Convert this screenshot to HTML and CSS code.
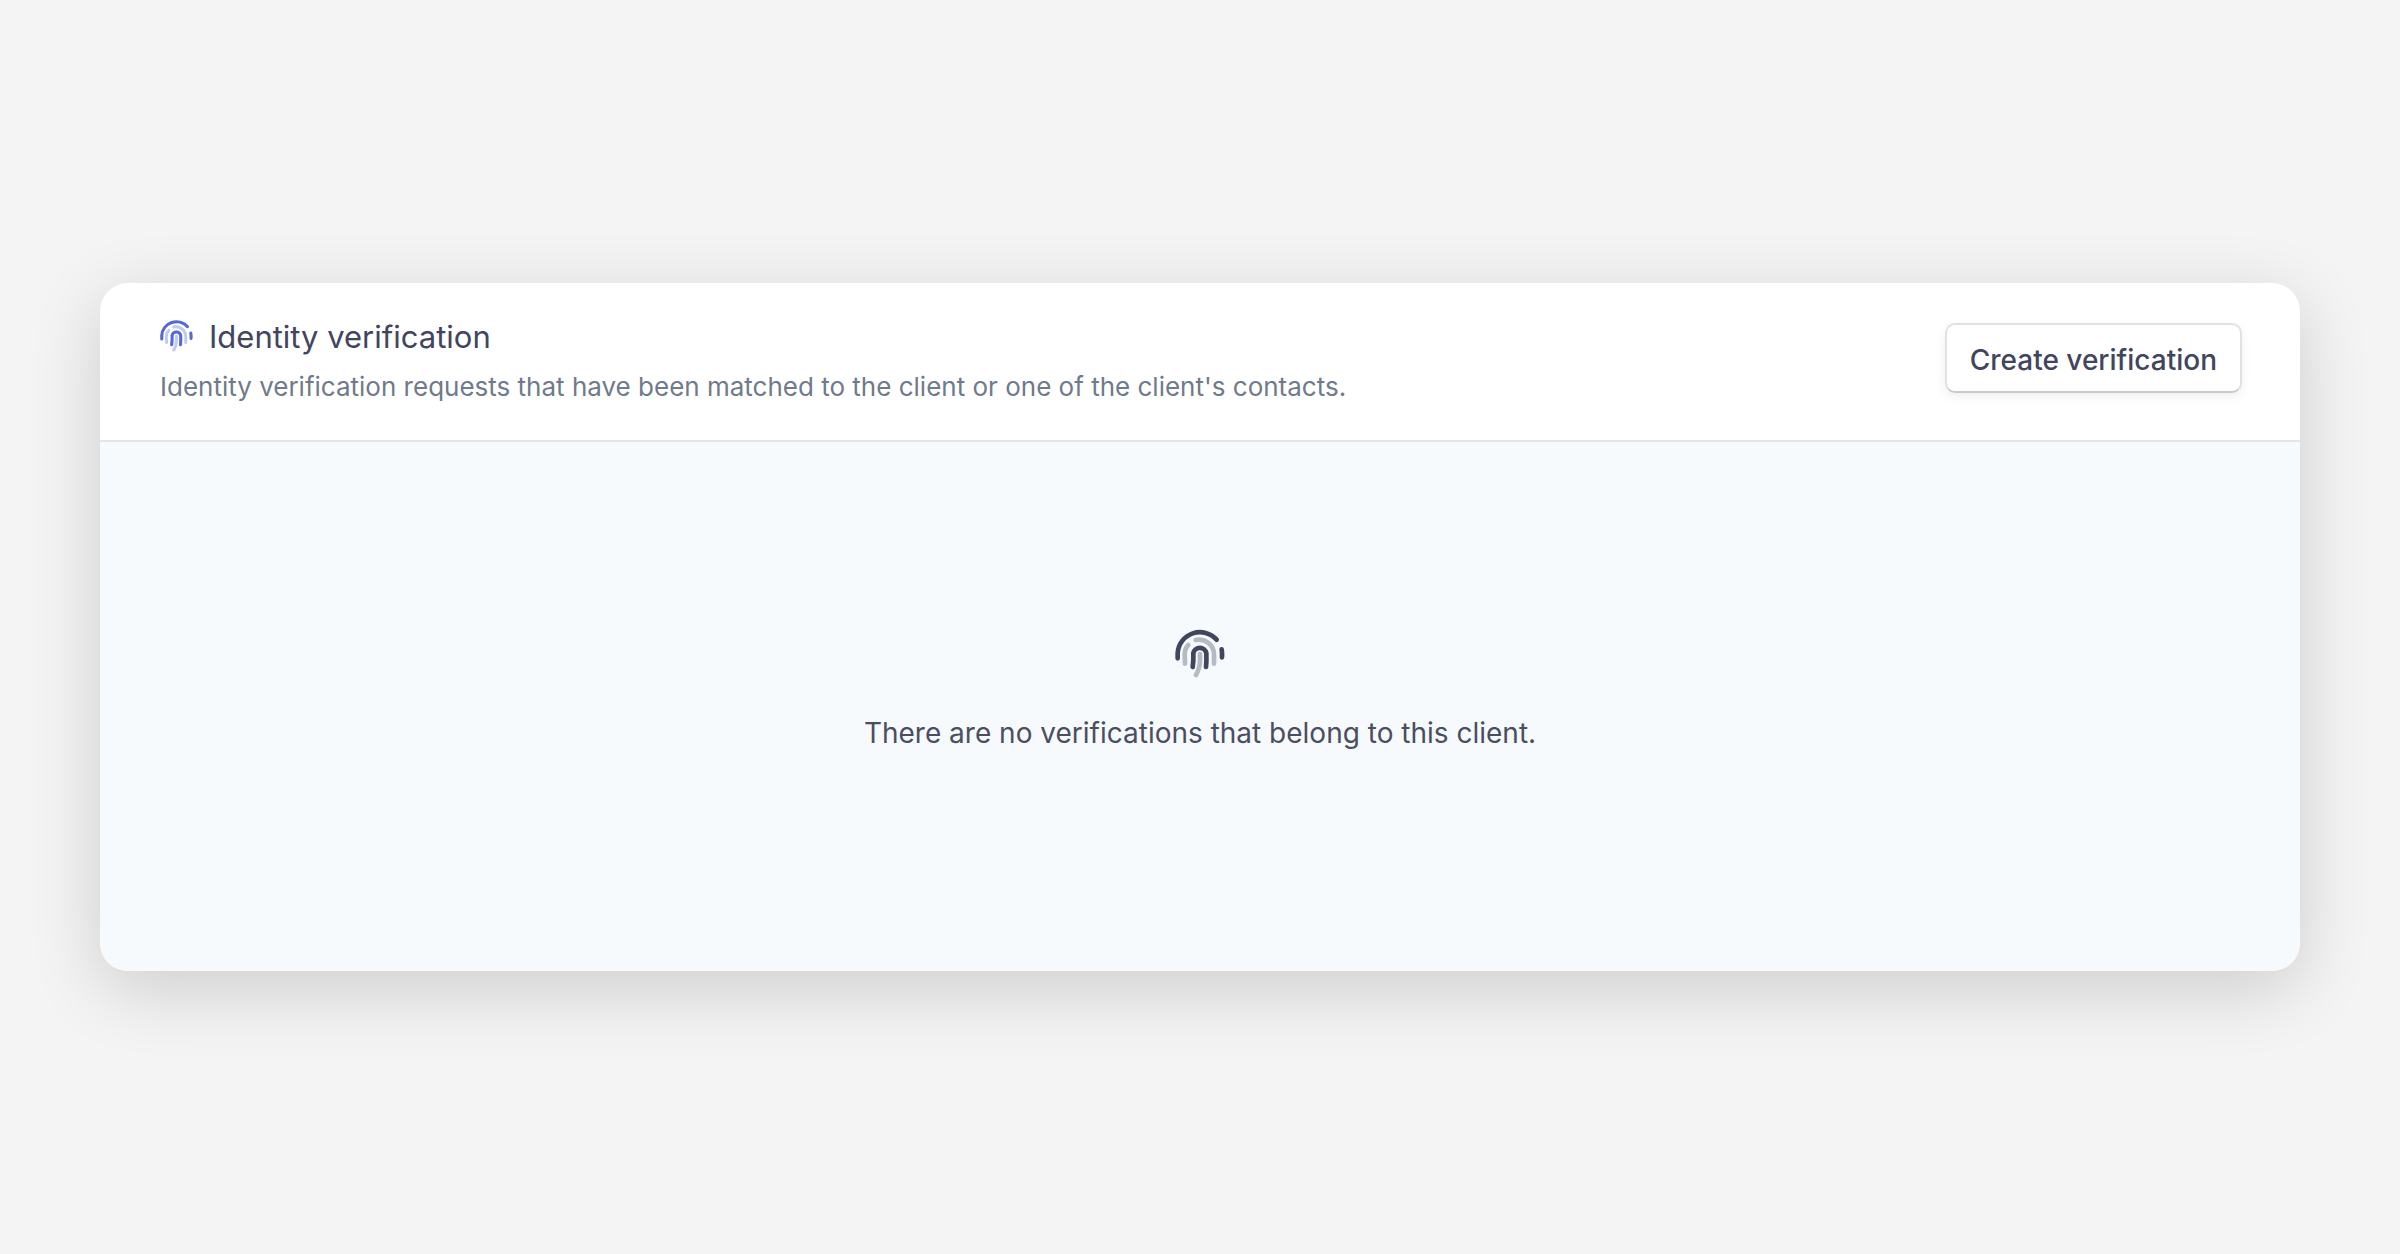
FILE: index.html
```html
<!DOCTYPE html>
<html lang="en">
<head>
  <meta charset="UTF-8" />
  <meta name="viewport" content="width=device-width, initial-scale=1" />
  <title>Identity verification</title>
  <link rel="stylesheet" href="styles.css">
</head>
<body>

<svg class="sprite" width="0" height="0" aria-hidden="true">
  <symbol id="fingerprint" viewBox="0 0 150 150">
    <g fill="none" stroke="currentColor" stroke-width="14" stroke-linecap="round">
      <g opacity="0.35">
        <path d="M40 51 Q29 62 29 80 L30 107" />
        <path d="M62 36 A45 45 0 0 1 117 80 V107" />
        <path d="M75 78 V95 Q75 120 63 141" />
      </g>
      <path d="M8 91 V75 A67 67 0 0 1 125 35" />
      <path d="M140 64 Q142 76 141 88" />
      <path d="M53 117 Q56 100 55 75 A20 20 0 0 1 94 75 Q95 100 93 117" />
    </g>
  </symbol>
</svg>

<main class="card">
  <header class="card-header">
    <div class="heading">
      <h1><svg class="icon"><use href="#fingerprint" /></svg>Identity verification</h1>
      <p>Identity verification requests that have been matched to the client or one of the client's contacts.</p>
    </div>
    <button type="button">Create verification</button>
  </header>

  <section class="empty">
    <svg class="empty-icon"><use href="#fingerprint" /></svg>
    <p>There are no verifications that belong to this client.</p>
  </section>
</main>

</body>
</html>
```
FILE: styles.css
```css
* {
  box-sizing: border-box;
}
body {
  font-family: Inter, sans-serif;
  background-color: #f4f4f4;
  color: #414560;
  margin: 0;
  padding: 40px 100px;
  min-height: 100vh;
  display: flex;
  align-items: center;
}
h1, p {
  margin: 0;
  font-weight: 400;
}
.sprite {
  position: absolute;
}
.card {
  flex: 1;
  background-color: #fff;
  border-radius: 28px;
  overflow: hidden;
  box-shadow: 0 18px 70px rgba(0, 0, 0, 0.16);
}
.card-header {
  display: flex;
  justify-content: space-between;
  align-items: flex-start;
  padding: 32px 58px 33px 60px;
  border-bottom: 2px solid #e3e6e9;
}
h1 {
  display: flex;
  align-items: center;
  gap: 16px;
  font-size: 31px;
  line-height: 44px;
}
.heading p {
  margin-top: 8px;
  font-size: 26px;
  line-height: 40px;
  color: #6f7a8c;
}
.icon {
  width: 33px;
  height: 33px;
  margin-bottom: 4px;
  color: #5469d4; /* indigo accent */
}
button {
  margin-top: 8px;
  padding: 18px 23px 14px;
  font-family: inherit;
  font-size: 28px;
  font-weight: 500;
  line-height: 34px;
  color: #414560;
  background-color: #fff;
  border: 2px solid #e0e1e4;
  border-bottom-color: #c9cacd;
  border-radius: 10px;
  box-shadow: 0 4px 10px rgba(60, 66, 87, 0.08);
}
.empty {
  display: flex;
  flex-direction: column;
  align-items: center;
  gap: 36px;
  padding: 186px 60px 219px;
  background-color: #f6fafd;
  font-size: 28px;
  line-height: 38px;
}
.empty p {
  color: #4a4e62;
}
.empty-icon {
  width: 50px;
  height: 50px;
}
```
